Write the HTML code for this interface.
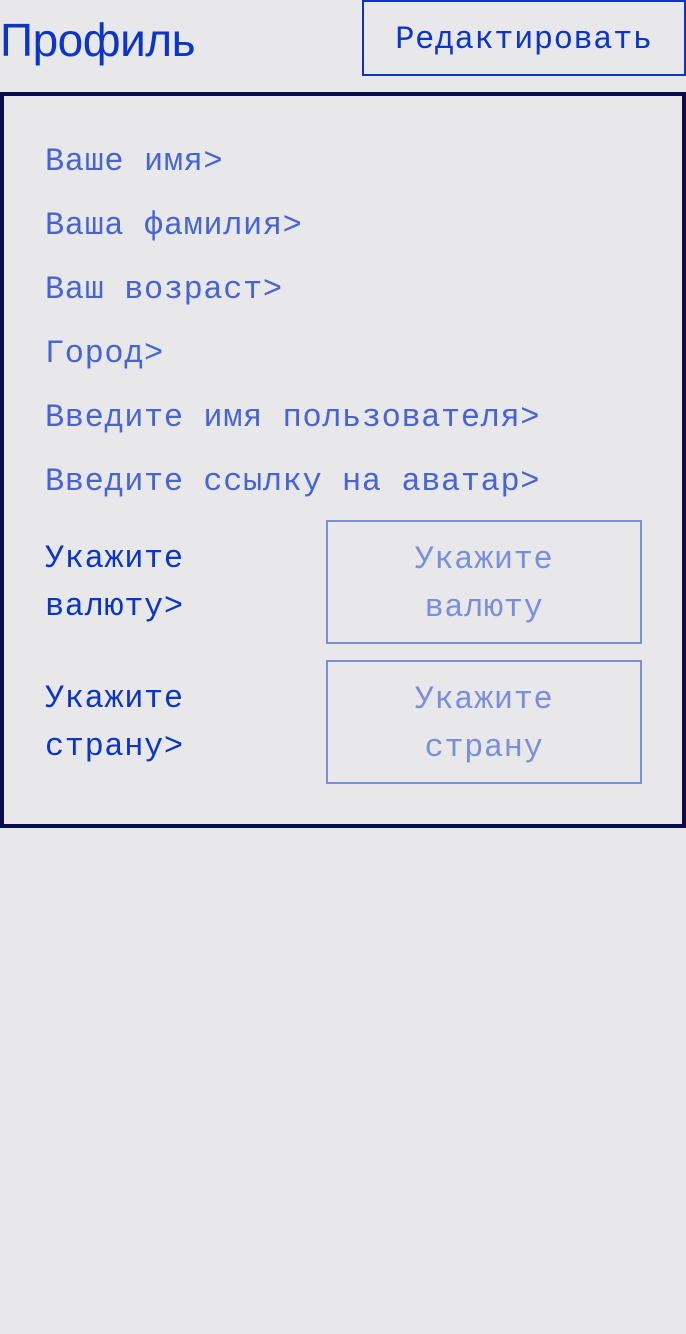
<!DOCTYPE html>
<html><head><meta charset="utf-8"><style>
body{margin:0;width:686px;height:1334px;background:#e8e7e9;position:relative;overflow:hidden;font-family:"Liberation Sans",sans-serif;}
.t{position:absolute;left:0;top:8px;font-size:46px;color:#0a35c8;letter-spacing:-0.5px;line-height:64px;}
.btn{position:absolute;left:362px;top:0;box-sizing:border-box;width:324px;height:76px;border:2px solid #0a35c8;font-family:"Liberation Mono",monospace;font-size:32px;letter-spacing:0.6px;color:#0a35c8;text-align:center;line-height:76px;}
.box{position:absolute;left:0;top:92px;width:686px;height:736px;border:4px solid #0b0b4e;box-sizing:border-box;}
.l{position:absolute;left:45px;font-family:"Liberation Mono",monospace;font-size:32px;letter-spacing:0.6px;color:#4665d3;white-space:nowrap;line-height:40px;}
.d{color:#0a35c8;line-height:48px;}
.b{position:absolute;left:326px;width:316px;height:124px;border:2px solid #7a90dc;box-sizing:border-box;font-family:"Liberation Mono",monospace;font-size:32px;letter-spacing:0.6px;color:#7a8fdb;text-align:center;line-height:48px;padding-top:14px;}
</style></head><body>
<div class="t">Профиль</div>
<div class="btn">Редактировать</div>
<div class="box"></div>
<div class="l" style="top:142px">Ваше имя&gt;</div>
<div class="l" style="top:206px">Ваша фамилия&gt;</div>
<div class="l" style="top:270px">Ваш возраст&gt;</div>
<div class="l" style="top:334px">Город&gt;</div>
<div class="l" style="top:398px">Введите имя пользователя&gt;</div>
<div class="l" style="top:462px">Введите ссылку на аватар&gt;</div>
<div class="l d" style="top:535px">Укажите<br>валюту&gt;</div>
<div class="b" style="top:520px">Укажите<br>валюту</div>
<div class="l d" style="top:675px">Укажите<br>страну&gt;</div>
<div class="b" style="top:660px">Укажите<br>страну</div>
</body></html>
